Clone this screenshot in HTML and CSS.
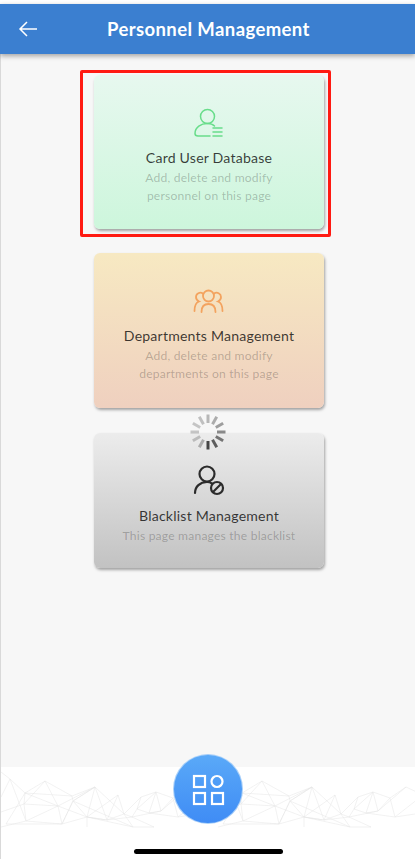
FILE: index.html
```html
<!DOCTYPE html>
<html lang="en">
<head>
<meta charset="utf-8">
<title>Personnel Management</title>
<link rel="stylesheet" href="styles.css">
</head>
<body>
<div class="app">
  <header class="topbar">
    <svg class="back" width="20" height="18" viewBox="0 0 20 18" aria-hidden="true"><path d="M19 9H2M9 2 2 9l7 7"/></svg>
    <h1 class="topbar-title">Personnel Management</h1>
  </header>
  <main class="content">
    <div class="highlight">
      <section class="card card-green">
        <svg class="card-icon" width="34" height="34" viewBox="0 0 34 34" aria-hidden="true"><g class="ico-green"><circle cx="15.500" cy="10.500" r="7"/><path d="M18 30H6C4 30 3 29 3 27.500C3 21 9 17.500 15.500 17.500C18 17.500 20.500 18 22.500 20"/><path d="M21 22h9M21 26h9M21 30h9"/></g></svg>
        <h2 class="card-title">Card User Database</h2>
        <p class="card-desc">Add, delete and modify<br>personnel on this page</p>
      </section>
    </div>
    <section class="card card-orange">
      <svg class="card-icon" width="34" height="34" viewBox="0 0 34 34" aria-hidden="true"><g class="ico-orange"><circle cx="16.500" cy="12" r="5.500"/><path d="M9.500 28C9.500 22.500 12 20 16.500 20S23.500 22.500 23.500 28"/><path d="M11 9.500C8 7.500 4 9.500 4 13C4 15 5 16.500 7 17.500C4 18.500 2.500 22 2.500 27"/><path d="M22 9.500C25 7.500 29 9.500 29 13C29 15 28 16.500 26 17.500C29 18.500 30.500 22 30.500 27"/></g></svg>
      <h2 class="card-title">Departments Management</h2>
      <p class="card-desc">Add, delete and modify<br>departments on this page</p>
    </section>
    <section class="card card-grey">
      <svg class="card-icon" width="34" height="34" viewBox="0 0 34 34" aria-hidden="true"><g class="ico-dark"><circle cx="15" cy="10" r="7.500"/><path d="M3 29C3 22.500 8 18 15 18C17 18 18.500 18.500 20 19.500"/><circle cx="25" cy="24" r="6"/><path d="M21 28 29 20"/></g></svg>
      <h2 class="card-title">Blacklist Management</h2>
      <p class="card-desc">This page manages the blacklist</p>
    </section>
    <svg class="spinner" width="38" height="38" viewBox="-19 -19 38 38" role="img" aria-label="Loading">
      <line y1="9" y2="17.500" transform="rotate(0)" stroke-opacity=".7"/>
      <line y1="9" y2="17.500" transform="rotate(-30)" stroke-opacity=".6"/>
      <line y1="9" y2="17.500" transform="rotate(-60)" stroke-opacity=".5"/>
      <line y1="9" y2="17.500" transform="rotate(-90)" stroke-opacity=".44"/>
      <line y1="9" y2="17.500" transform="rotate(-120)" stroke-opacity=".36"/>
      <line y1="9" y2="17.500" transform="rotate(-150)" stroke-opacity=".3"/>
      <line y1="9" y2="17.500" transform="rotate(180)" stroke-opacity=".26"/>
      <line y1="9" y2="17.500" transform="rotate(150)" stroke-opacity=".22"/>
      <line y1="9" y2="17.500" transform="rotate(120)" stroke-opacity=".2"/>
      <line y1="9" y2="17.500" transform="rotate(90)" stroke-opacity=".2"/>
      <line y1="9" y2="17.500" transform="rotate(60)" stroke-opacity=".2"/>
      <line y1="9" y2="17.500" transform="rotate(30)" stroke-opacity=".26"/>
    </svg>
  </main>
  <footer class="dock">
    <svg class="net" width="100%" height="68" aria-hidden="true">
      <defs>
        <pattern id="net-tile" width="217" height="68" patternUnits="userSpaceOnUse">
          <path class="net-lines" d="M0 5 9 12 24 26 23 37 25 54 61 57 86 50 106 53 123 47 131 50 153 60M9 12 0 30M9 12 25 54M44 14 24 26 5 57M44 14 23 37M44 14 57 39 61 57M44 14 71 29 72 34 86 50 106 53M24 26 71 29M24 26 57 39 86 50M23 37 57 39 94 20 72 34M23 37 0 45M94 20 71 29M94 20 72 34 61 57M94 20 86 50M94 20 106 53M94 20 123 47M117 28 86 50M117 28 106 53M117 28 123 47 132 60M106 53 131 50M140 30 123 47M140 30 136 42 131 50M155 25 136 42M155 25 148 46M155 25 160 44M155 25 172 31 177 50M140 30 155 25M136 42 148 46 160 44 172 31M148 46 177 50M131 50 160 44M188 20 172 31M188 20 205 28 217 30M188 20 160 44M205 28 177 50M205 28 199 50 217 44M5 57 61 57M0 60 25 54M25 54 57 39M72 34 132 60M132 60 153 60M86 50 132 60M61 57 72 34M86 50 86 60M177 50 217 44"/>
        </pattern>
      </defs>
      <rect class="net-fill" width="100%" height="68"/>
    </svg>
    <div class="home-bar"></div>
    <button class="fab" type="button" aria-label="Apps">
      <svg width="34" height="34" viewBox="0 0 34 34" aria-hidden="true"><g class="ico-white"><rect x="3" y="4" width="11" height="11"/><circle cx="26" cy="9.500" r="5.500"/><rect x="3" y="21" width="11" height="11"/><rect x="21" y="21" width="11" height="11"/></g></svg>
    </button>
  </footer>
</div>
</body>
</html>
```

FILE: styles.css
```css
* { box-sizing: border-box; }
html, body { margin: 0; height: 100%; background: #fff; }
body { font-family: Lato, "Open Sans", sans-serif; overflow: hidden; }

.app { height: 859px; padding-top: 4px; display: flex; flex-direction: column; position: relative; }

.topbar {
  height: 50px;
  flex: none;
  display: flex;
  align-items: center;
  background: #3b7fd0;
  box-shadow: 0 2px 5px rgba(0, 0, 0, .35);
  position: relative;
  z-index: 2;
  padding-left: 18px;
}
.back { flex: none; }
.back path { fill: none; stroke: #fff; stroke-width: 1.500; }
.topbar-title { margin: 0 0 0 69px; font-size: 18.500px; font-weight: 700; color: #fff; letter-spacing: .4px; white-space: nowrap; }

.content {
  flex: 1;
  background: #f7f7f7;
  border-left: 1px solid #d9d9d9;
  padding: 16px 0 0 79px;
  display: flex;
  flex-direction: column;
  align-items: flex-start;
  position: relative;
}

.highlight { border: 3px solid #ff1a12; border-radius: 2px; padding: 2px 4px 5px 11px; width: 251px; height: 167px; margin-bottom: 16px; }

.card {
  width: 230px;
  border-radius: 6px;
  box-shadow: 1px 2px 3px rgba(0, 0, 0, .35);
  padding-top: 31px;
  display: flex;
  flex-direction: column;
  align-items: center;
  text-align: center;
}
.card-green { height: 154px; background: linear-gradient(#e7f8ef, #cdf6dc); }
.card-orange { height: 155px; background: linear-gradient(#f7e9c2, #efd0bf); margin: 0 0 25px 14px; }
.card-grey { height: 135px; background: linear-gradient(#ececec, #c2c2c2); margin-left: 14px; }

.card-icon { display: block; flex: none; }
.card-title { margin: 8px 0 1px; font-size: 14.100px; line-height: 20px; font-weight: 400; color: rgba(0, 0, 0, .76); white-space: nowrap; letter-spacing: .2px; }
.card-desc { margin: 0; font-size: 12.100px; line-height: 18px; color: rgba(0, 0, 0, .24); white-space: nowrap; letter-spacing: .2px; }

.ico-green, .ico-orange, .ico-dark { fill: none; stroke-linecap: round; }
.ico-green { stroke: #68dd8a; stroke-width: 1.500; }
.ico-orange { stroke: #f3a35f; stroke-width: 1.800; }
.ico-dark { stroke: #2b2b2b; stroke-width: 2.200; }

.spinner { position: absolute; left: 187.500px; top: 359px; }
.spinner line { stroke: #000; stroke-width: 3; }

.dock { height: 92px; flex: none; background: #fff; border-left: 1px solid #d9d9d9; position: relative; }
.net { display: block; }
.net-fill { fill: url(#net-tile); }
.net-lines { fill: none; stroke: #e4e4e4; stroke-width: .5; }
.home-bar { width: 149px; height: 5px; margin: 14px 0 0 133px; background: #000; border-radius: 3px; }

.fab {
  position: absolute;
  left: 172px;
  top: -13px;
  width: 70px;
  height: 70px;
  padding: 0;
  border: 1.500px solid rgba(190, 220, 250, .8);
  border-radius: 50%;
  background: linear-gradient(#5aa9f8, #3f8cf5);
  display: flex;
  align-items: center;
  justify-content: center;
}
.ico-white { fill: none; stroke: #fff; stroke-width: 2.200; }
```
